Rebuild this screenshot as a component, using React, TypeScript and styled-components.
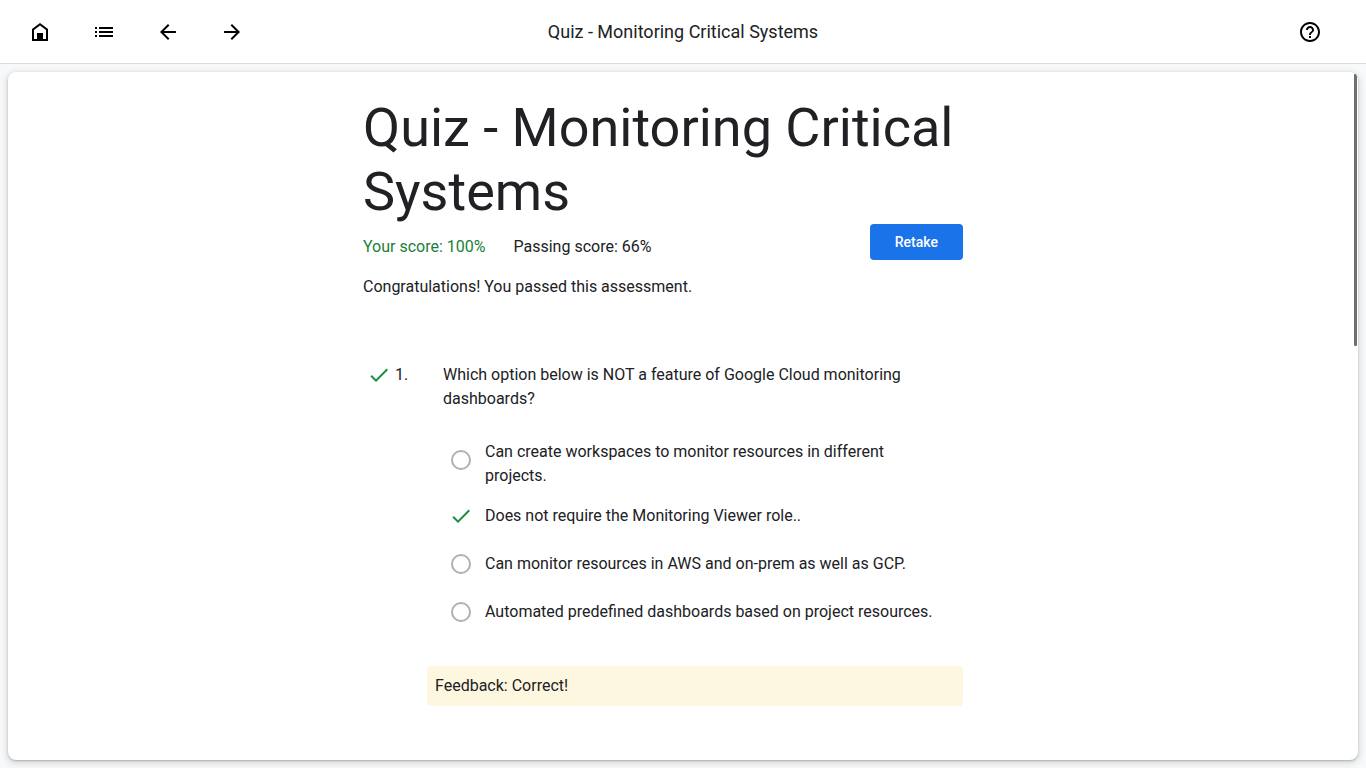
import React from 'react';
import styled, { createGlobalStyle } from 'styled-components';

const GlobalStyle = createGlobalStyle`
  *, *::before, *::after { box-sizing: border-box; }
  body {
    margin: 0;
    background: #f8f9fa;
    color: #202124;
    font: 400 16px/24px Roboto, 'Liberation Sans', sans-serif;
  }
`;

const displayFont = "'Google Sans', Roboto, sans-serif";

const Page = styled.div`
  display: flex;
  flex-direction: column;
  height: 100vh;
`;

const TopBar = styled.header`
  display: grid;
  grid-template-columns: 1fr auto 1fr;
  align-items: center;
  flex: none;
  height: 64px;
  padding: 0 16px;
  background: #fff;
  border-bottom: 1px solid #dadce0;
`;

const BarGroup = styled.nav<{ $end?: boolean }>`
  display: flex;
  gap: 16px;
  justify-content: ${(p) => (p.$end ? 'flex-end' : 'flex-start')};
  padding-right: ${(p) => (p.$end ? '16px' : '0')};
`;

const BarTitle = styled.div`
  font: 400 18px/24px ${displayFont};
`;

const IconButton = styled.button`
  display: grid;
  place-items: center;
  width: 48px;
  height: 48px;
  padding: 0;
  border: 0;
  border-radius: 50%;
  background: transparent;
  color: #000;
  cursor: pointer;
`;

const Card = styled.main`
  position: relative;
  flex: 1;
  min-height: 0;
  margin: 8px;
  overflow: hidden;
  background: #fff;
  border-radius: 8px;
  box-shadow: 0 1px 2px rgba(60, 64, 67, 0.3), 0 2px 6px 2px rgba(60, 64, 67, 0.15);
`;

const ScrollThumb = styled.div`
  position: absolute;
  top: 2px;
  right: 1px;
  width: 3px;
  height: 272px;
  border-radius: 1px;
  background: #6e6e6e;
`;

const Content = styled.article`
  max-width: 640px;
  margin: 0 auto;
  padding: 24px 40px 24px 0;
`;

const Heading = styled.h1`
  margin: 0;
  font: 400 54px/64px ${displayFont};
`;

const ScoreRow = styled.div`
  display: flex;
  justify-content: space-between;
  align-items: flex-start;
`;

const Scores = styled.div`
  display: flex;
  gap: 28px;
  padding-top: 11px;
`;

const Score = styled.span<{ $passed?: boolean }>`
  color: ${(p) => (p.$passed ? '#188038' : 'inherit')};
`;

const RetakeButton = styled.button`
  height: 36px;
  padding: 0 25px;
  border: 0;
  border-radius: 4px;
  background: #1a73e8;
  color: #fff;
  font: 500 14px/20px ${displayFont};
  cursor: pointer;
`;

const Result = styled.p`
  margin: 15px 0 64px;
`;

const Question = styled.section`
  display: grid;
  grid-template-columns: 80px 1fr;
`;

const Marker = styled.div`
  display: flex;
  gap: 4px;
  padding-left: 4px;
  height: 24px;
`;

const Prompt = styled.p`
  margin: 0;
`;

const Options = styled.div`
  display: flex;
  flex-direction: column;
  grid-column: 2;
  gap: 8px;
  margin: 29px 0 34px;
`;

const Option = styled.label`
  display: flex;
  align-items: flex-start;
  gap: 4px;
  margin-left: -2px;
  padding-right: 16px;
`;

const Control = styled.span`
  display: grid;
  flex: none;
  place-items: center;
  width: 40px;
  height: 40px;

  > * { grid-area: 1 / 1; }
`;

const Radio = styled.input<{ $marked: boolean }>`
  appearance: none;
  width: 20px;
  height: 20px;
  margin: 0;
  border: 2px solid ${(p) => (p.$marked ? 'transparent' : '#b1b1b1')};
  border-radius: 50%;
`;

const OptionText = styled.span`
  display: flex;
  align-items: center;
  min-height: 40px;
`;

const Feedback = styled.div`
  grid-column: 1 / -1;
  margin-left: 64px;
  padding: 8px;
  border-radius: 4px;
  background: #fef7e0;
`;

const Icon = ({ path, color = 'currentColor' }: { path: string; color?: string }) => (
  <svg width="24" height="24" viewBox="0 0 24 24" fill={color} fillRule="evenodd" aria-hidden="true">
    <path d={path} />
  </svg>
);

const icons = {
  home: 'M4 21V9l8-6 8 6v12H4zM6 19h3v-6h6v6h3v-9l-6-4.5L6 10z',
  list: 'M3 9h2V7H3v2zm0 4h2v-2H3v2zm0 4h2v-2H3v2zM7 7v2h14V7H7zm0 6h14v-2H7v2zm0 4h14v-2H7v2z',
  back: 'M20 11H7.83l5.59-5.59L12 4l-8 8 8 8 1.41-1.41L7.83 13H20v-2z',
  forward: 'M12 4l-1.41 1.41L16.17 11H4v2h12.17l-5.58 5.59L12 20l8-8z',
  help: 'M11 18h2v-2h-2v2zm1-16C6.48 2 2 6.48 2 12s4.48 10 10 10 10-4.48 10-10S17.52 2 12 2zm0 18c-4.41 0-8-3.59-8-8s3.59-8 8-8 8 3.59 8 8-3.59 8-8 8zm0-14c-2.21 0-4 1.79-4 4h2c0-1.1.9-2 2-2s2 .9 2 2c0 2-3 1.75-3 5h2c0-2.25 3-2.5 3-5 0-2.21-1.79-4-4-4z',
  check: 'M9 16.17L4.83 12l-1.42 1.41L9 19 21 7l-1.41-1.41z',
};

const options = [
  { text: 'Can create workspaces to monitor resources in different projects.', correct: false },
  { text: 'Does not require the Monitoring Viewer role..', correct: true },
  { text: 'Can monitor resources in AWS and on-prem as well as GCP.', correct: false },
  { text: 'Automated predefined dashboards based on project resources.', correct: false },
];

export default function App() {
  return (
    <Page>
      <GlobalStyle />
      <TopBar>
        <BarGroup aria-label="Course">
          <IconButton aria-label="Home"><Icon path={icons.home} /></IconButton>
          <IconButton aria-label="Outline"><Icon path={icons.list} /></IconButton>
          <IconButton aria-label="Previous"><Icon path={icons.back} /></IconButton>
          <IconButton aria-label="Next"><Icon path={icons.forward} /></IconButton>
        </BarGroup>
        <BarTitle>Quiz - Monitoring Critical Systems</BarTitle>
        <BarGroup $end aria-label="Support">
          <IconButton aria-label="Help"><Icon path={icons.help} /></IconButton>
        </BarGroup>
      </TopBar>
      <Card>
        <Content>
          <Heading>Quiz - Monitoring Critical Systems</Heading>
          <ScoreRow>
            <Scores>
              <Score $passed>Your score: 100%</Score>
              <Score>Passing score: 66%</Score>
            </Scores>
            <RetakeButton>Retake</RetakeButton>
          </ScoreRow>
          <Result>Congratulations! You passed this assessment.</Result>
          <Question>
            <Marker>
              <Icon path={icons.check} color="#1e8e3e" />
              <span>1.</span>
            </Marker>
            <Prompt>Which option below is NOT a feature of Google Cloud monitoring dashboards?</Prompt>
            <Options role="radiogroup" aria-label="Question 1">
              {options.map((o) => (
                <Option key={o.text}>
                  <Control>
                    <Radio type="radio" name="q1" $marked={o.correct} defaultChecked={o.correct} />
                    {o.correct && <Icon path={icons.check} color="#1e8e3e" />}
                  </Control>
                  <OptionText>{o.text}</OptionText>
                </Option>
              ))}
            </Options>
            <Feedback>Feedback: Correct!</Feedback>
          </Question>
        </Content>
        <ScrollThumb />
      </Card>
    </Page>
  );
}
